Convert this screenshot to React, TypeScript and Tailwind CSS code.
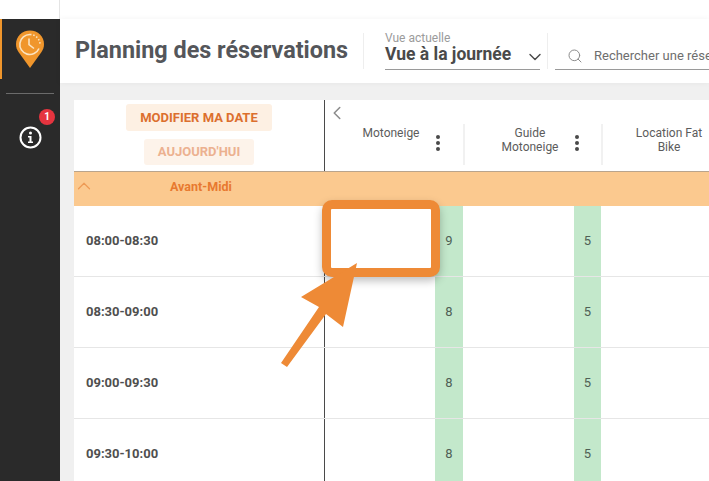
import React from 'react';
import { ChevronDown, ChevronLeft, ChevronUp, Search } from 'lucide-react';

const slots = [
  { time: '08:00-08:30', moto: 9, guide: 5 },
  { time: '08:30-09:00', moto: 8, guide: 5 },
  { time: '09:00-09:30', moto: 8, guide: 5 },
  { time: '09:30-10:00', moto: 8, guide: 5 },
];

// Logo pin with the clock inside
function PinLogo() {
  return (
    <svg width="30" height="39" viewBox="0 0 30 39">
      <path d="M15 0.5C7 0.5 1 6.5 1 14c0 3 .8 5.5 2.5 8L15 38l11.5-16c1.7-2.5 2.5-5 2.5-8C29 6.500 23 .5 15 .5z" fill="#f0962c" />
      <path d="M15 4.500a10 10 0 1 0 9 14" fill="none" stroke="#fbe3c0" strokeWidth="1.6" />
      <path d="M15 4.500a10 10 0 0 1 10 10" fill="none" stroke="#fbe3c0" strokeWidth="1.6" strokeDasharray="1.500 1.800" />
      <path d="M14 8.500v6l5 4" fill="none" stroke="#fbe3c0" strokeWidth="1.6" />
    </svg>
  );
}

function InfoIcon() {
  return (
    <svg width="23" height="23" viewBox="0 0 23 23">
      <circle cx="11.500" cy="11.500" r="10" fill="none" stroke="#fff" strokeWidth="2" />
      <circle cx="11.500" cy="7" r="1.500" fill="#fff" />
      <path d="M9 10h3.500v5.500H14v1.500H9v-1.500h1.500v-4H9z" fill="#fff" />
    </svg>
  );
}

function Kebab() {
  return (
    <div className="flex flex-col gap-[2px]">
      <span className="w-[4px] h-[4px] rounded-full bg-[#4a4a4a]" />
      <span className="w-[4px] h-[4px] rounded-full bg-[#4a4a4a]" />
      <span className="w-[4px] h-[4px] rounded-full bg-[#4a4a4a]" />
    </div>
  );
}

function Sidebar() {
  return (
    <div className="w-[60px] shrink-0 bg-[#2a2a2a] flex flex-col">
      <div className="h-[60px] border-l-2 border-[#f0962c] flex justify-center pt-[11px] pr-[2px]">
        <PinLogo />
      </div>
      <div className="mx-[6px] mt-[14px] h-px bg-[#6b6b6b]" />
      <div className="relative flex justify-center mt-[32px] pl-[1px]">
        <InfoIcon />
        <span className="absolute top-[-17px] left-[39px] w-[16px] h-[16px] rounded-full bg-[#e5343f] text-white text-[10px] font-bold leading-[16px] text-center">
          1
        </span>
      </div>
    </div>
  );
}

function Header() {
  return (
    <div className="h-[64px] shrink-0 bg-white flex items-center pl-[15px] shadow-[0_0_6px_rgba(0,0,0,0.05)] overflow-hidden">
      <h1 className="w-[273px] shrink-0 text-[23.400px] font-bold text-[#54565a] whitespace-nowrap leading-none">Planning des réservations</h1>
      <div className="ml-[15px] w-px h-[36px] bg-[#eeeeee] shrink-0" />
      <div className="ml-[21px] w-[155px] shrink-0 border-b border-[#9a9a9a] h-[36px] flex flex-col mt-[2px]">
        <span className="text-[12px] leading-[10px] text-[#9b9b9b] mt-[-1px]">Vue actuelle</span>
        <div className="flex items-center justify-between mt-[-2px]">
          <span className="text-[17.500px] leading-[20px] font-bold text-[#4a4a4a] whitespace-nowrap">Vue à la journée</span>
          <ChevronDown size={20} strokeWidth={1.700} className="text-[#4a4a4a] mt-[6px] mr-[-5px]" />
        </div>
      </div>
      <div className="ml-[7px] w-px h-[36px] bg-[#eeeeee] shrink-0" />
      <div className="ml-[7px] flex-1 min-w-0 border-b border-[#9a9a9a] h-[36px] mt-[2px] flex items-center pl-[12px] gap-[11px] overflow-hidden">
        <Search size={16} strokeWidth={1.500} className="text-[#8c8c8c] shrink-0 mt-[9px]" />
        <span className="text-[13px] text-[#6e6e6e] whitespace-nowrap mt-[9px]">Rechercher une réservation</span>
      </div>
    </div>
  );
}

function ColumnHead({ label, width, offset }: { label: React.ReactNode; width: string; offset: string }) {
  return (
    <div className={`${width} shrink-0 h-[41px] border-r-2 border-[#f1f1f1] flex items-start`}>
      <div className={`${offset} w-[90px] shrink-0 text-center text-[12px] leading-[14px] text-[#5c5c5c] pt-[2px]`}>{label}</div>
      <div className="mt-[11px]"><Kebab /></div>
    </div>
  );
}

function TableHead() {
  return (
    <div className="flex h-[71px] bg-white">
      <div className="w-[251px] shrink-0 border-r border-[#4a4a4a] flex flex-col items-center pt-[4px]">
        <div className="w-[146px] h-[27px] rounded-[3px] bg-[#fdf0e3] text-[13px] font-bold text-[#dc6f2e] flex items-center justify-center">
          MODIFIER MA DATE
        </div>
        <div className="mt-[8px] w-[110px] h-[26px] rounded-[3px] bg-[#fdf3ea] text-[13px] font-bold text-[#ecb190] flex items-center justify-center">
          AUJOURD'HUI
        </div>
      </div>
      <div className="flex-1 min-w-0 relative overflow-hidden">
        <ChevronLeft size={22} strokeWidth={1.700} className="absolute left-px top-[2px] text-[#8c8c8c]" />
        <div className="flex pt-[24px]">
          <ColumnHead width="w-[140px]" offset="ml-[21px]" label="Motoneige" />
          <ColumnHead width="w-[138px]" offset="ml-[20px]" label={<>Guide<br />Motoneige</>} />
          <div className="ml-[10px] w-[112px] shrink-0 text-center text-[12px] leading-[14px] text-[#5c5c5c] pt-[2px]">
            Location Fat<br />Bike
          </div>
        </div>
      </div>
    </div>
  );
}

function SlotRow({ time, moto, guide }: { time: string; moto: number; guide: number }) {
  return (
    <div className="flex h-[71px] bg-white border-b border-[#e6e6e6]">
      <div className="w-[251px] shrink-0 border-r border-[#4a4a4a] flex items-center pl-[12px]">
        <span className="text-[13px] font-bold text-[#4f4f4f]">{time}</span>
      </div>
      <div className="w-[110px] shrink-0" />
      <div className="w-[28px] shrink-0 bg-[#c3e8cb] flex items-center justify-center text-[13px] text-[#4f5f55]">{moto}</div>
      <div className="w-[111px] shrink-0" />
      <div className="w-[27px] shrink-0 bg-[#c3e8cb] flex items-center justify-center text-[13px] text-[#4f5f55]">{guide}</div>
      <div className="flex-1" />
    </div>
  );
}

// Orange highlight box and arrow lying over the table
function Annotation() {
  return (
    <>
      <div className="absolute left-[322px] top-[200px] w-[118px] h-[77px] rounded-[10px] border-[9px] border-[#ee8a36] bg-white shadow-[0_4px_8px_rgba(0,0,0,0.25)]" />
      <svg className="absolute left-[270px] top-[255px]" width="100" height="120" viewBox="0 0 100 120">
        <path d="M87 8L73 72 56 59 17 112 11 108 49 52 31 42z" fill="#ee8a36" />
      </svg>
    </>
  );
}

export default function App() {
  return (
    <div
      className="relative w-[709px] h-[481px] overflow-hidden bg-[#f0f0f0]"
      style={{ fontFamily: 'Roboto, sans-serif' }}
    >
      <div className="h-[19px] bg-white flex">
        <div className="w-[60px] border-r border-[#e4e4e4]" />
      </div>
      <div className="flex h-[462px]">
        <Sidebar />
        <div className="flex-1 min-w-0 flex flex-col">
          <Header />
          <div className="pl-[14px] pt-[17px]">
            <TableHead />
            <div className="h-[35px] bg-[#fbc98f] border-t border-[#b9a48c] flex items-center relative">
              <ChevronUp size={22} strokeWidth={1.300} className="absolute left-[-1px] top-[3px] text-[#ee9a55]" />
              <span className="ml-[96px] mt-[-3px] text-[12.500px] font-bold text-[#e8792f]">Avant-Midi</span>
            </div>
            {slots.map((slot) => (
              <SlotRow key={slot.time} {...slot} />
            ))}
          </div>
        </div>
      </div>
      <Annotation />
    </div>
  );
}
